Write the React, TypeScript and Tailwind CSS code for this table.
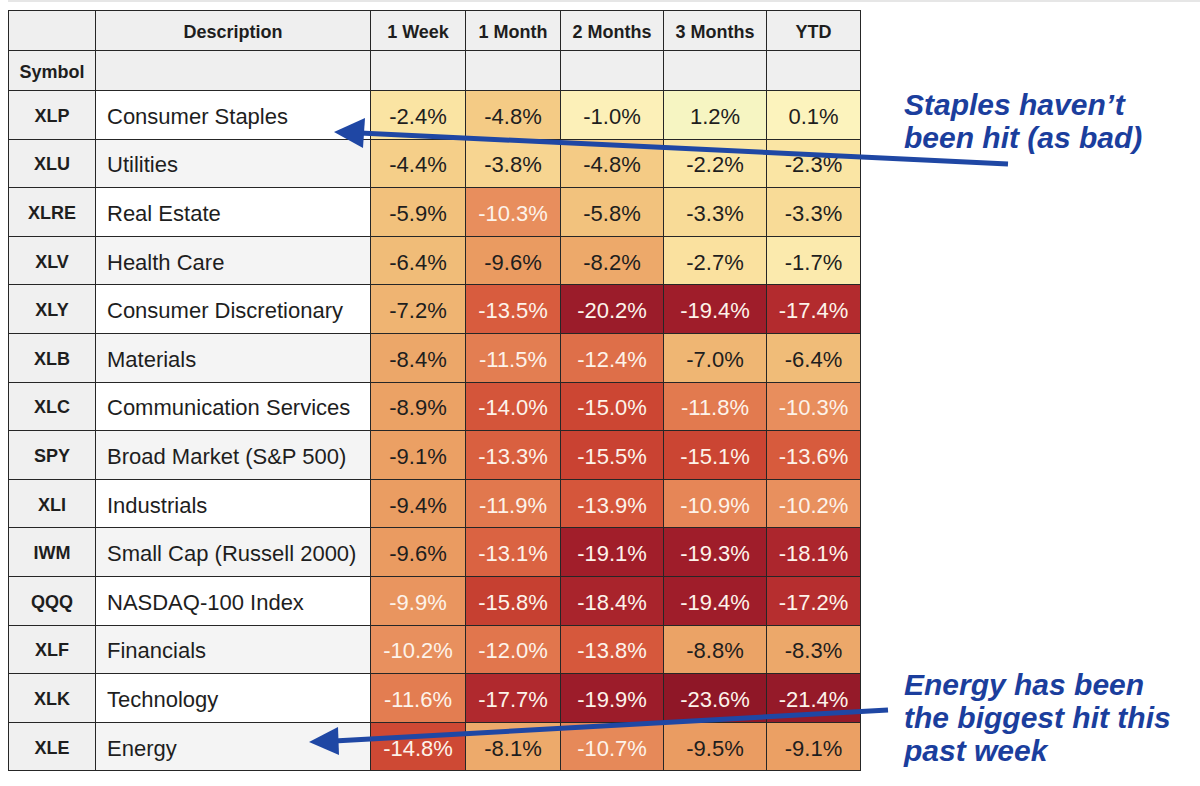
import React from "react";

// heat map rows: symbol, description, 1W, 1M, 2M, 3M, YTD
const rows: [string, string, number[]][] = [
  ["XLP", "Consumer Staples", [-2.4, -4.8, -1.0, 1.2, 0.1]],
  ["XLU", "Utilities", [-4.4, -3.8, -4.8, -2.2, -2.3]],
  ["XLRE", "Real Estate", [-5.9, -10.3, -5.8, -3.3, -3.3]],
  ["XLV", "Health Care", [-6.4, -9.6, -8.2, -2.7, -1.7]],
  ["XLY", "Consumer Discretionary", [-7.2, -13.5, -20.2, -19.4, -17.4]],
  ["XLB", "Materials", [-8.4, -11.5, -12.4, -7.0, -6.4]],
  ["XLC", "Communication Services", [-8.9, -14.0, -15.0, -11.8, -10.3]],
  ["SPY", "Broad Market (S&P 500)", [-9.1, -13.3, -15.5, -15.1, -13.6]],
  ["XLI", "Industrials", [-9.4, -11.9, -13.9, -10.9, -10.2]],
  ["IWM", "Small Cap (Russell 2000)", [-9.6, -13.1, -19.1, -19.3, -18.1]],
  ["QQQ", "NASDAQ-100 Index", [-9.9, -15.8, -18.4, -19.4, -17.2]],
  ["XLF", "Financials", [-10.2, -12.0, -13.8, -8.8, -8.3]],
  ["XLK", "Technology", [-11.6, -17.7, -19.9, -23.6, -21.4]],
  ["XLE", "Energy", [-14.8, -8.1, -10.7, -9.5, -9.1]],
];

const periods = ["1 Week", "1 Month", "2 Months", "3 Months", "YTD"];

// colour stops sampled from the picture (value -> rgb)
const stops: [number, number[]][] = [
  [1.2, [246, 245, 194]],
  [0, [252, 243, 189]],
  [-1.0, [252, 240, 184]],
  [-2.5, [250, 227, 161]],
  [-4.5, [245, 206, 136]],
  [-6.5, [240, 187, 119]],
  [-8.5, [236, 166, 104]],
  [-9.6, [234, 155, 97]],
  [-10.3, [232, 142, 93]],
  [-11.8, [226, 122, 79]],
  [-13.5, [216, 92, 62]],
  [-15.0, [204, 70, 51]],
  [-16.0, [197, 62, 49]],
  [-17.5, [178, 42, 46]],
  [-19.3, [159, 29, 42]],
  [-21.5, [149, 26, 41]],
  [-24, [142, 22, 39]],
];

function heat(v: number) {
  for (let i = 0; i < stops.length - 1; i++) {
    const [a, ca] = stops[i];
    const [b, cb] = stops[i + 1];
    if (v <= a && v >= b) {
      const t = (a - v) / (a - b);
      const c = ca.map((x, k) => Math.round(x + (cb[k] - x) * t));
      return `rgb(${c[0]},${c[1]},${c[2]})`;
    }
  }
  return v > 0 ? "rgb(246,245,194)" : "rgb(142,22,39)";
}

const cell = "border border-[#262626] pt-[3px]";

export default function App() {
  return (
    <div className="relative w-[1200px] h-[786px] bg-white overflow-hidden font-['Liberation_Sans',Arial,sans-serif] text-[#1e1e1e]">
      <div className="ml-[8px] h-[2px] bg-[#e6e6e6]" />

      <div className="flex pt-[8px]">
        {/* heat map table */}
        <table className="ml-[8px] w-[852px] table-fixed border-collapse">
          <colgroup>
            <col className="w-[87px]" />
            <col className="w-[275px]" />
            <col className="w-[95px]" />
            <col className="w-[95px]" />
            <col className="w-[103px]" />
            <col className="w-[103px]" />
            <col className="w-[94px]" />
          </colgroup>
          <thead>
            <tr className="h-[40px] bg-[#efefef] text-[18px] font-bold">
              <th className={cell} />
              <th className={cell}>Description</th>
              {periods.map((p) => (
                <th key={p} className={cell}>
                  {p}
                </th>
              ))}
            </tr>
            <tr className="h-[40px] bg-[#efefef] text-[18px] font-bold">
              <th className={cell}>Symbol</th>
              <th className={cell} />
              {periods.map((p) => (
                <th key={p} className={cell} />
              ))}
            </tr>
          </thead>
          <tbody>
            {rows.map(([sym, desc, vals], i) => (
              <tr key={sym} className="h-[48.6px]">
                <td className={`${cell} bg-[#f0f0f0] text-center text-[18px] font-bold`}>{sym}</td>
                <td className={`${cell} ${i % 2 === 0 ? "bg-white" : "bg-[#f4f4f4]"} pl-[11px] text-[22px] whitespace-nowrap`}>
                  {desc}
                </td>
                {vals.map((v, k) => (
                  <td
                    key={k}
                    className={`${cell} text-center text-[22px] ${v <= -9.8 ? "text-[#fdf3ea]" : "text-[#1e1e1e]"}`}
                    style={{ backgroundColor: heat(v) }}
                  >
                    {v.toFixed(1)}%
                  </td>
                ))}
              </tr>
            ))}
          </tbody>
        </table>

        {/* annotations */}
        <div className="ml-[43px] flex flex-col text-[30px] leading-[33px] font-bold italic text-[#1b3e9d] whitespace-nowrap">
          <p className="mt-[78px]">
            Staples haven’t
            <br />
            been hit (as bad)
          </p>
          <p className="mt-[514px]">
            Energy has been
            <br />
            the biggest hit this
            <br />
            past week
          </p>
        </div>
      </div>

      {/* arrows */}
      <svg className="absolute inset-0 pointer-events-none" width="1200" height="786" viewBox="0 0 1200 786">
        <line x1="360" y1="133" x2="1008" y2="164" stroke="#1f47a4" strokeWidth="5" />
        <polygon points="334,132 365,118 363,148" fill="#1f47a4" />
        <line x1="334" y1="741" x2="888" y2="710" stroke="#1f47a4" strokeWidth="5" />
        <polygon points="309,742 338,727 339,755" fill="#1f47a4" />
      </svg>
    </div>
  );
}
